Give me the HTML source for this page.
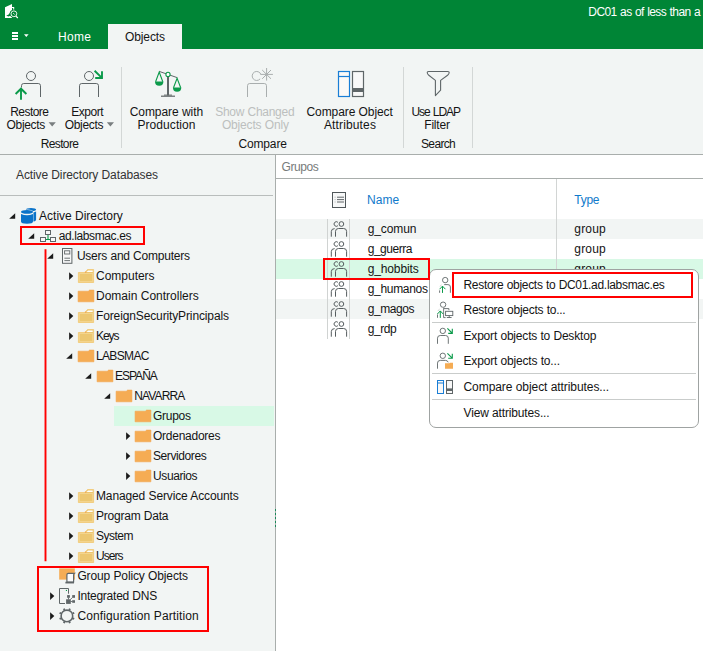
<!DOCTYPE html>
<html><head><meta charset="utf-8"><title>Veeam Explorer for Microsoft Active Directory</title>
<style>
html,body{margin:0;padding:0;}
body{width:703px;height:651px;overflow:hidden;position:relative;background:#f2f5f4;font-family:"Liberation Sans", sans-serif;font-size:12px;}
.a{position:absolute;}
.t{position:absolute;white-space:nowrap;line-height:16px;font-family:"Liberation Sans", sans-serif;}
svg{position:absolute;overflow:visible;}
</style></head><body>
<!-- title bar + tab strip -->
<div class="a" style="left:0;top:0;width:703px;height:49px;background:#008536;"></div>
<div class="a" style="left:108px;top:24px;width:74px;height:25px;background:#f2f5f4;"></div>
<!-- ribbon separators -->
<div class="a" style="left:121px;top:67px;width:1px;height:81px;background:#d3d7d6;"></div>
<div class="a" style="left:403px;top:67px;width:1px;height:81px;background:#d3d7d6;"></div>
<div class="a" style="left:472px;top:67px;width:1px;height:81px;background:#d3d7d6;"></div>
<!-- ribbon bottom border -->
<div class="a" style="left:0;top:154px;width:703px;height:1px;background:#a9aeac;"></div>
<!-- left panel header line -->
<div class="a" style="left:0;top:195px;width:273px;height:1px;background:#b9bdbc;"></div>
<!-- tree selected row -->
<div class="a" style="left:114px;top:406px;width:160px;height:20px;background:#d8f9e6;"></div>
<!-- right panel -->
<div class="a" style="left:276px;top:155px;width:427px;height:496px;background:#ffffff;"></div>
<div class="a" style="left:275px;top:155px;width:1px;height:496px;background:#a9aeac;"></div>
<div class="a" style="left:276px;top:178px;width:427px;height:1px;background:#a9aeac;"></div>
<!-- splitter grip -->
<div class="a" style="left:275px;top:509px;width:1px;height:2px;background:#1a8a5a;"></div>
<div class="a" style="left:275px;top:513px;width:1px;height:2px;background:#1a8a5a;"></div>
<div class="a" style="left:275px;top:517px;width:1px;height:2px;background:#1a8a5a;"></div>
<div class="a" style="left:275px;top:521px;width:1px;height:2px;background:#1a8a5a;"></div>
<div class="a" style="left:275px;top:525px;width:1px;height:2px;background:#1a8a5a;"></div>
<!-- table rows -->
<div class="a" style="left:276px;top:219px;width:427px;height:20px;background:#f2f5f4;"></div>
<div class="a" style="left:276px;top:259px;width:427px;height:20px;background:#d8f9e6;"></div>
<div class="a" style="left:276px;top:299px;width:427px;height:20px;background:#f2f5f4;"></div>
<!-- column separator -->
<div class="a" style="left:556px;top:179px;width:1px;height:160px;background:#d2d5d4;"></div>
<!-- icon cell borders -->
<div class="a" style="left:327px;top:219px;width:1px;height:120px;background:#d0d3d2;"></div>
<div class="a" style="left:349px;top:219px;width:1px;height:120px;background:#d0d3d2;"></div>
<!-- red annotations -->
<div class="a" style="left:20px;top:226px;width:121px;height:15px;border:2px solid #ff0000;"></div>
<div class="a" style="left:37px;top:566px;width:168px;height:62px;border:2px solid #ff0000;"></div>

<svg width="703" height="651" viewBox="0 0 703 651" style="left:0;top:0" fill="none">
<g fill="#fff" stroke="none">
<path d="M5 7.2 L12 4 L12 18 L5 18 Z"/>
<path d="M12 7 h2.2 v3 h-1 v-2 h-1.2 z"/>
</g>
<path d="M6.2 15.6 Q9.4 14.8 10.6 11.2 L12 12 Q11.4 16 8.4 16.6 Z" fill="#008536"/>
<circle cx="13.9" cy="13.8" r="4.2" fill="#008536"/>
<circle cx="13.9" cy="13.8" r="2.9" fill="#008536" stroke="#fff" stroke-width="0.9"/>
<path d="M13.2 13.1 l1.5 1.5" stroke="#fff" stroke-width="0.8"/>
<path d="M15.9 16.1 L17.8 18" stroke="#fff" stroke-width="1.2"/>
<g fill="#fff"><rect x="12" y="32" width="6" height="2"/><rect x="12" y="35" width="6" height="2"/><rect x="12" y="38" width="6" height="2"/>
<path d="M24 34.3 h4.6 l-2.3 2.6 z"/></g>
<circle cx="31" cy="76" r="4.5" stroke="#5f6668" stroke-width="1"/><path d="M21.5 87.5 V85.7 Q21.5 83.5 23.7 83.5 H38.3 Q40.5 83.5 40.5 85.7 V97" stroke="#5f6668" stroke-width="1"/>
<path d="M21 99.8 V89.2 M15.6 94 L21 88.7 L26.4 94" stroke="#0b9a4a" stroke-width="1.9"/>
<circle cx="89" cy="76" r="4.5" stroke="#5f6668" stroke-width="1"/><path d="M79.5 97 V85.7 Q79.5 83.5 81.7 83.5 H96.3 Q98.5 83.5 98.5 85.7 V97" stroke="#5f6668" stroke-width="1"/>
<path d="M94.6 70.8 L101.6 77.6 M102 71.2 V78.4 M95.2 78 H102.9" stroke="#0b9a4a" stroke-width="1.9"/>
<path d="M48.6 122.2 h7.2 l-3.6 4.4 z M106.8 122.2 h7.2 l-3.6 4.4 z" fill="#7a7f80"/>
<path d="M159.2 71.4 L177.1 77.6" stroke="#5f6668" stroke-width="1"/>
<rect x="167" y="76" width="2" height="19.5" fill="#5f6668"/>
<rect x="164" y="94.6" width="8" height="1" fill="#5f6668"/><rect x="161" y="95.6" width="14" height="1.2" fill="#5f6668"/>
<circle cx="168" cy="74.4" r="2.1" fill="#fff" stroke="#0b9a4a" stroke-width="1.1"/>
<path d="M155.6 81.8 L159.2 72 L162.8 81.8" stroke="#0b9a4a" stroke-width="1.1"/>
<path d="M155 81.6 H163.4 Q163.4 85.8 159.2 85.8 Q155 85.8 155 81.6 Z" fill="#0b9a4a"/>
<path d="M173.5 87.8 L177.1 78.2 L180.7 87.8" stroke="#0b9a4a" stroke-width="1.1"/>
<path d="M172.9 87.6 H181.3 Q181.3 91.8 177.1 91.8 Q172.9 91.8 172.9 87.6 Z" fill="#0b9a4a"/>
<path d="M260.1 78.9 A4.5 4.5 0 1 1 260.9 74.4" stroke="#a9aeae" stroke-width="1"/>
<path d="M247.5 97 V85.7 Q247.5 83.5 249.7 83.5 H264.3 Q266.5 83.5 266.5 85.7 V97" stroke="#a9aeae" stroke-width="1"/>
<path d="M266.6 68 V80.6 M260.4 74.4 H272.9 M262.2 70 L271 78.8 M271 70 L262.2 78.8" stroke="#a9aeae" stroke-width="1"/>
<rect x="338.5" y="71.5" width="11" height="25" fill="#fbf9f7" stroke="#1a7ed6" stroke-width="1.2"/>
<path d="M338.5 76.5 H349.5" stroke="#1a7ed6" stroke-width="1.2"/>
<rect x="352.5" y="71.5" width="11" height="25" fill="#f8f8f8" stroke="#5f6668" stroke-width="1.2"/>
<rect x="352.5" y="88" width="11" height="4" fill="#5f6668"/>
<path d="M428.6 71.5 H447.8 Q449.4 71.5 449.1 73 Q448.9 74.2 447.6 75.2 L440.6 80.4 V90.2 L435.4 95.6 V80.4 L428.8 75.2 Q427.5 74.2 427.3 73 Q427 71.5 428.6 71.5 Z" stroke="#5f6668" stroke-width="1.1" stroke-linejoin="round"/>
<path d="M15.2 213.2 V218.8 H9.2 Z" fill="#1a1a1a"/>
<ellipse cx="31" cy="209.6" rx="5.1" ry="1.6" fill="#0a73c9"/>
<path d="M25.9 211.4 Q31 213.9 36.1 211.4 V219.6 Q36.1 221.8 31 221.8 Q25.9 221.8 25.9 219.6 Z" fill="#0a73c9"/>
<path d="M20.6 212 Q20.6 209.4 27 209.4 Q33.4 209.4 33.4 212 V222 Q33.4 224.4 27 224.4 Q20.6 224.4 20.6 222 Z" fill="#f2f5f4"/>
<ellipse cx="27" cy="211.9" rx="6" ry="1.85" fill="#0a73c9"/>
<path d="M21 213.9 Q27 216.8 33 213.9 V221.6 Q33 223.8 27 223.8 Q21 223.8 21 221.6 Z" fill="#0a73c9"/>
<path d="M34.2 233.2 V238.8 H28.2 Z" fill="#1a1a1a"/>
<g stroke="#5f6668" stroke-width="1" fill="#f7f8f8"><rect x="45.5" y="230.5" width="5" height="4"/><rect x="40.5" y="237.5" width="5" height="4"/><rect x="50.5" y="237.5" width="5" height="4"/></g>
<path d="M48 235 V239.5 M45.9 239.5 H50.1" stroke="#0b9a4a" stroke-width="1.1"/>
<path d="M53.2 253.2 V258.8 H47.2 Z" fill="#1a1a1a"/>
<rect x="62.5" y="248.5" width="9.4" height="14.8" fill="#f7f8f8" stroke="#5f6668" stroke-width="1"/>
<rect x="64.6" y="250.8" width="5.2" height="3.2" stroke="#5f6668" stroke-width="0.9"/>
<path d="M64.4 258.2 H70 M64.4 260.6 H70" stroke="#5f6668" stroke-width="0.9"/>
<path d="M69.1 272.2 V280 L73.3 276.1 Z" fill="#1a1a1a"/>
<path d="M78.4 272.5 H85.1 L87.5 269.5 H93.6 V282.5 H78.4 Z" fill="#ecc771" stroke="#f2cd80" stroke-width="1" stroke-linejoin="round"/><rect x="79.4" y="273.5" width="13.2" height="8" fill="none" stroke="#f3d48d" stroke-width="1"/><path d="M86.5 272 L88.1 270.4 H92.7 V272 Z" fill="#ffffff"/><rect x="84.9" y="271.6" width="1.3" height="1.2" fill="#f2a64e"/>
<path d="M69.1 292.2 V300 L73.3 296.1 Z" fill="#1a1a1a"/>
<path d="M78.1 291.2 H88.3 L89.5 290.1 H93.9 V301.8 H78.1 Z" fill="#f5ac54" stroke="#f3a44c" stroke-width="0.6"/>
<path d="M69.1 312.2 V320 L73.3 316.1 Z" fill="#1a1a1a"/>
<path d="M78.4 312.5 H85.1 L87.5 309.5 H93.6 V322.5 H78.4 Z" fill="#ecc771" stroke="#f2cd80" stroke-width="1" stroke-linejoin="round"/><rect x="79.4" y="313.5" width="13.2" height="8" fill="none" stroke="#f3d48d" stroke-width="1"/><path d="M86.5 312 L88.1 310.4 H92.7 V312 Z" fill="#ffffff"/><rect x="84.9" y="311.6" width="1.3" height="1.2" fill="#f2a64e"/>
<path d="M69.1 332.2 V340 L73.3 336.1 Z" fill="#1a1a1a"/>
<path d="M78.4 332.5 H85.1 L87.5 329.5 H93.6 V342.5 H78.4 Z" fill="#ecc771" stroke="#f2cd80" stroke-width="1" stroke-linejoin="round"/><rect x="79.4" y="333.5" width="13.2" height="8" fill="none" stroke="#f3d48d" stroke-width="1"/><path d="M86.5 332 L88.1 330.4 H92.7 V332 Z" fill="#ffffff"/><rect x="84.9" y="331.6" width="1.3" height="1.2" fill="#f2a64e"/>
<path d="M72.2 353.2 V358.8 H66.2 Z" fill="#1a1a1a"/>
<path d="M78.1 351.2 H88.3 L89.5 350.1 H93.9 V361.8 H78.1 Z" fill="#f5ac54" stroke="#f3a44c" stroke-width="0.6"/>
<path d="M91.2 373.2 V378.8 H85.2 Z" fill="#1a1a1a"/>
<path d="M97.1 371.2 H107.3 L108.5 370.1 H112.9 V381.8 H97.1 Z" fill="#f5ac54" stroke="#f3a44c" stroke-width="0.6"/>
<path d="M110.2 393.2 V398.8 H104.2 Z" fill="#1a1a1a"/>
<path d="M116.1 391.2 H126.3 L127.5 390.1 H131.9 V401.8 H116.1 Z" fill="#f5ac54" stroke="#f3a44c" stroke-width="0.6"/>
<path d="M135.1 411.2 H145.3 L146.5 410.1 H150.9 V421.8 H135.1 Z" fill="#f5ac54" stroke="#f3a44c" stroke-width="0.6"/>
<path d="M126.1 432.2 V440 L130.3 436.1 Z" fill="#1a1a1a"/>
<path d="M135.1 431.2 H145.3 L146.5 430.1 H150.9 V441.8 H135.1 Z" fill="#f5ac54" stroke="#f3a44c" stroke-width="0.6"/>
<path d="M126.1 452.2 V460 L130.3 456.1 Z" fill="#1a1a1a"/>
<path d="M135.1 451.2 H145.3 L146.5 450.1 H150.9 V461.8 H135.1 Z" fill="#f5ac54" stroke="#f3a44c" stroke-width="0.6"/>
<path d="M126.1 472.2 V480 L130.3 476.1 Z" fill="#1a1a1a"/>
<path d="M135.1 471.2 H145.3 L146.5 470.1 H150.9 V481.8 H135.1 Z" fill="#f5ac54" stroke="#f3a44c" stroke-width="0.6"/>
<path d="M69.1 492.2 V500 L73.3 496.1 Z" fill="#1a1a1a"/>
<path d="M78.4 492.5 H85.1 L87.5 489.5 H93.6 V502.5 H78.4 Z" fill="#ecc771" stroke="#f2cd80" stroke-width="1" stroke-linejoin="round"/><rect x="79.4" y="493.5" width="13.2" height="8" fill="none" stroke="#f3d48d" stroke-width="1"/><path d="M86.5 492 L88.1 490.4 H92.7 V492 Z" fill="#ffffff"/><rect x="84.9" y="491.6" width="1.3" height="1.2" fill="#f2a64e"/>
<path d="M69.1 512.2 V520 L73.3 516.1 Z" fill="#1a1a1a"/>
<path d="M78.4 512.5 H85.1 L87.5 509.5 H93.6 V522.5 H78.4 Z" fill="#ecc771" stroke="#f2cd80" stroke-width="1" stroke-linejoin="round"/><rect x="79.4" y="513.5" width="13.2" height="8" fill="none" stroke="#f3d48d" stroke-width="1"/><path d="M86.5 512 L88.1 510.4 H92.7 V512 Z" fill="#ffffff"/><rect x="84.9" y="511.6" width="1.3" height="1.2" fill="#f2a64e"/>
<path d="M69.1 532.2 V540 L73.3 536.1 Z" fill="#1a1a1a"/>
<path d="M78.4 532.5 H85.1 L87.5 529.5 H93.6 V542.5 H78.4 Z" fill="#ecc771" stroke="#f2cd80" stroke-width="1" stroke-linejoin="round"/><rect x="79.4" y="533.5" width="13.2" height="8" fill="none" stroke="#f3d48d" stroke-width="1"/><path d="M86.5 532 L88.1 530.4 H92.7 V532 Z" fill="#ffffff"/><rect x="84.9" y="531.6" width="1.3" height="1.2" fill="#f2a64e"/>
<path d="M69.1 552.2 V560 L73.3 556.1 Z" fill="#1a1a1a"/>
<path d="M78.4 552.5 H85.1 L87.5 549.5 H93.6 V562.5 H78.4 Z" fill="#ecc771" stroke="#f2cd80" stroke-width="1" stroke-linejoin="round"/><rect x="79.4" y="553.5" width="13.2" height="8" fill="none" stroke="#f3d48d" stroke-width="1"/><path d="M86.5 552 L88.1 550.4 H92.7 V552 Z" fill="#ffffff"/><rect x="84.9" y="551.6" width="1.3" height="1.2" fill="#f2a64e"/>
<rect x="59.2" y="568.4" width="15.6" height="11.2" fill="#f5ac54"/>
<path d="M66.9 582 V574.8 Q66.9 573.4 68.3 573.4 H74.4 Q73.4 574.2 73.6 575.6 V582 Z" fill="#fbfbfb" stroke="#5f6668" stroke-width="1.2"/>
<path d="M65.4 582.6 H74" stroke="#5f6668" stroke-width="1.7"/>
<path d="M50.1 592.2 V600 L54.3 596.1 Z" fill="#1a1a1a"/>
<path d="M68.5 593.7 V588.5 H59.5 V603.5 H65" stroke="#5f6668" stroke-width="1" stroke-linejoin="miter"/>
<rect x="65.9" y="589.9" width="1.1" height="1.1" fill="#0b9a4a"/>
<g fill="#5f6668"><rect x="66.1" y="599.3" width="4.7" height="4.6"/><rect x="67.1" y="595.1" width="2.8" height="2.7"/><rect x="72.2" y="595.1" width="2.8" height="2.7"/><rect x="72.2" y="600.2" width="2.8" height="2.6"/></g>
<path d="M68.5 597.5 V599.5 M70.3 599.6 L72.4 597.5 M70.6 601.5 H72.4" stroke="#5f6668" stroke-width="0.9"/>
<path d="M50.1 612.2 V620 L54.3 616.1 Z" fill="#1a1a1a"/>
<circle cx="66.9" cy="615.9" r="5.8" stroke="#5f6668" stroke-width="1.6"/>
<path d="M72.72 618.31 L74.20 618.92 M69.31 621.72 L69.92 623.20 M64.49 621.72 L63.88 623.20 M61.08 618.31 L59.60 618.92 M61.08 613.49 L59.60 612.88 M64.49 610.08 L63.88 608.60 M69.31 610.08 L69.92 608.60 M72.72 613.49 L74.20 612.88" stroke="#5f6668" stroke-width="1.9"/>
<rect x="332.5" y="192.5" width="13" height="15" fill="#f7f8f8" stroke="#50575a" stroke-width="1"/>
<path d="M337 197.2 H344 M337 199.6 H344 M337 202 H344" stroke="#50575a" stroke-width="0.9"/>
<path d="M334.6 197.2 H335.6 M334.6 199.6 H335.6 M334.6 202 H335.6" stroke="#aab0b0" stroke-width="0.9"/>
<path d="M337.9 225.7 A2.3 2.3 0 1 1 337.9 222.3" stroke="#555c5e" stroke-width="1"/><circle cx="341.4" cy="224" r="2.35" stroke="#555c5e" stroke-width="1"/><path d="M335.5 236.7 V231.4 Q335.5 228.5 338.5 228.5 H343.6 Q346.6 228.5 346.6 231.4 V236.7" stroke="#555c5e" stroke-width="1"/><path d="M331.3 236.7 V231.6 Q331.3 228.7 334.6 228.6" stroke="#555c5e" stroke-width="1"/>
<path d="M337.9 245.7 A2.3 2.3 0 1 1 337.9 242.3" stroke="#555c5e" stroke-width="1"/><circle cx="341.4" cy="244" r="2.35" stroke="#555c5e" stroke-width="1"/><path d="M335.5 256.7 V251.4 Q335.5 248.5 338.5 248.5 H343.6 Q346.6 248.5 346.6 251.4 V256.7" stroke="#555c5e" stroke-width="1"/><path d="M331.3 256.7 V251.6 Q331.3 248.7 334.6 248.6" stroke="#555c5e" stroke-width="1"/>
<path d="M337.9 265.7 A2.3 2.3 0 1 1 337.9 262.3" stroke="#555c5e" stroke-width="1"/><circle cx="341.4" cy="264" r="2.35" stroke="#555c5e" stroke-width="1"/><path d="M335.5 276.7 V271.4 Q335.5 268.5 338.5 268.5 H343.6 Q346.6 268.5 346.6 271.4 V276.7" stroke="#555c5e" stroke-width="1"/><path d="M331.3 276.7 V271.6 Q331.3 268.7 334.6 268.6" stroke="#555c5e" stroke-width="1"/>
<path d="M337.9 285.7 A2.3 2.3 0 1 1 337.9 282.3" stroke="#555c5e" stroke-width="1"/><circle cx="341.4" cy="284" r="2.35" stroke="#555c5e" stroke-width="1"/><path d="M335.5 296.7 V291.4 Q335.5 288.5 338.5 288.5 H343.6 Q346.6 288.5 346.6 291.4 V296.7" stroke="#555c5e" stroke-width="1"/><path d="M331.3 296.7 V291.6 Q331.3 288.7 334.6 288.6" stroke="#555c5e" stroke-width="1"/>
<path d="M337.9 305.7 A2.3 2.3 0 1 1 337.9 302.3" stroke="#555c5e" stroke-width="1"/><circle cx="341.4" cy="304" r="2.35" stroke="#555c5e" stroke-width="1"/><path d="M335.5 316.7 V311.4 Q335.5 308.5 338.5 308.5 H343.6 Q346.6 308.5 346.6 311.4 V316.7" stroke="#555c5e" stroke-width="1"/><path d="M331.3 316.7 V311.6 Q331.3 308.7 334.6 308.6" stroke="#555c5e" stroke-width="1"/>
<path d="M337.9 325.7 A2.3 2.3 0 1 1 337.9 322.3" stroke="#555c5e" stroke-width="1"/><circle cx="341.4" cy="324" r="2.35" stroke="#555c5e" stroke-width="1"/><path d="M335.5 336.7 V331.4 Q335.5 328.5 338.5 328.5 H343.6 Q346.6 328.5 346.6 331.4 V336.7" stroke="#555c5e" stroke-width="1"/><path d="M331.3 336.7 V331.6 Q331.3 328.7 334.6 328.6" stroke="#555c5e" stroke-width="1"/>
<path d="M45.5 249.2 V561.2" stroke="#ff0000" stroke-width="1.9"/>
</svg>
<div class="t" style="left:588.30px;top:3.84px;font-size:12px;color:#ffffff;letter-spacing:-0.563px;word-spacing:0.563px;">DC01 as of less than a</div>
<div class="t" style="left:58.00px;top:28.84px;font-size:12px;color:#ffffff;letter-spacing:0.328px;">Home</div>
<div class="t" style="left:125.00px;top:28.84px;font-size:12px;color:#141414;letter-spacing:-0.115px;">Objects</div>
<div class="t" style="left:10.20px;top:103.84px;font-size:12px;color:#141414;letter-spacing:-0.539px;">Restore</div>
<div class="t" style="left:6.50px;top:116.84px;font-size:12px;color:#141414;letter-spacing:-0.315px;">Objects</div>
<div class="t" style="left:71.20px;top:103.84px;font-size:12px;color:#141414;letter-spacing:-0.478px;">Export</div>
<div class="t" style="left:64.70px;top:116.84px;font-size:12px;color:#141414;letter-spacing:-0.315px;">Objects</div>
<div class="t" style="left:40.70px;top:135.84px;font-size:12px;color:#141414;letter-spacing:-0.622px;">Restore</div>
<div class="t" style="left:129.70px;top:103.84px;font-size:12px;color:#141414;letter-spacing:-0.053px;word-spacing:0.053px;">Compare with</div>
<div class="t" style="left:137.40px;top:116.84px;font-size:12px;color:#141414;letter-spacing:0.081px;">Production</div>
<div class="t" style="left:215.20px;top:103.84px;font-size:12px;color:#bcbfbe;letter-spacing:-0.266px;word-spacing:0.266px;">Show Changed</div>
<div class="t" style="left:221.90px;top:116.84px;font-size:12px;color:#bcbfbe;letter-spacing:-0.160px;word-spacing:0.160px;">Objects Only</div>
<div class="t" style="left:238.50px;top:135.84px;font-size:12px;color:#141414;letter-spacing:-0.160px;">Compare</div>
<div class="t" style="left:306.50px;top:103.84px;font-size:12px;color:#141414;letter-spacing:-0.090px;word-spacing:0.090px;">Compare Object</div>
<div class="t" style="left:323.90px;top:116.84px;font-size:12px;color:#141414;letter-spacing:0.144px;">Attributes</div>
<div class="t" style="left:411.50px;top:103.84px;font-size:12px;color:#141414;letter-spacing:-1.105px;word-spacing:1.105px;">Use LDAP</div>
<div class="t" style="left:424.30px;top:116.84px;font-size:12px;color:#141414;letter-spacing:-0.214px;">Filter</div>
<div class="t" style="left:421.00px;top:135.84px;font-size:12px;color:#141414;letter-spacing:-0.646px;">Search</div>
<div class="t" style="left:16.00px;top:166.84px;font-size:12px;color:#333333;letter-spacing:-0.119px;word-spacing:0.119px;">Active Directory Databases</div>
<div class="t" style="left:39.10px;top:207.84px;font-size:12px;color:#141414;letter-spacing:-0.017px;word-spacing:0.017px;">Active Directory</div>
<div class="t" style="left:58.70px;top:227.84px;font-size:12px;color:#141414;letter-spacing:-0.381px;">ad.labsmac.es</div>
<div class="t" style="left:76.90px;top:247.84px;font-size:12px;color:#141414;letter-spacing:-0.226px;word-spacing:0.226px;">Users and Computers</div>
<div class="t" style="left:96.00px;top:267.84px;font-size:12px;color:#141414;letter-spacing:-0.011px;">Computers</div>
<div class="t" style="left:96.00px;top:287.84px;font-size:12px;color:#141414;letter-spacing:0.006px;word-spacing:-0.006px;">Domain Controllers</div>
<div class="t" style="left:96.00px;top:307.84px;font-size:12px;color:#141414;letter-spacing:-0.128px;">ForeignSecurityPrincipals</div>
<div class="t" style="left:96.00px;top:327.84px;font-size:12px;color:#141414;letter-spacing:-1.062px;">Keys</div>
<div class="t" style="left:96.00px;top:347.84px;font-size:12px;color:#141414;letter-spacing:-0.660px;">LABSMAC</div>
<div class="t" style="left:115.00px;top:367.84px;font-size:12px;color:#141414;letter-spacing:-0.999px;">ESPAÑA</div>
<div class="t" style="left:134.30px;top:387.84px;font-size:12px;color:#141414;letter-spacing:-0.872px;">NAVARRA</div>
<div class="t" style="left:153.00px;top:407.84px;font-size:12px;color:#141414;letter-spacing:-0.272px;">Grupos</div>
<div class="t" style="left:153.00px;top:427.84px;font-size:12px;color:#141414;letter-spacing:-0.255px;">Ordenadores</div>
<div class="t" style="left:153.00px;top:447.84px;font-size:12px;color:#141414;letter-spacing:-0.407px;">Servidores</div>
<div class="t" style="left:153.00px;top:467.84px;font-size:12px;color:#141414;letter-spacing:-0.394px;">Usuarios</div>
<div class="t" style="left:96.00px;top:487.84px;font-size:12px;color:#141414;letter-spacing:-0.125px;word-spacing:0.125px;">Managed Service Accounts</div>
<div class="t" style="left:96.00px;top:507.84px;font-size:12px;color:#141414;letter-spacing:-0.220px;word-spacing:0.220px;">Program Data</div>
<div class="t" style="left:96.00px;top:527.84px;font-size:12px;color:#141414;letter-spacing:-0.503px;">System</div>
<div class="t" style="left:96.00px;top:547.84px;font-size:12px;color:#141414;letter-spacing:-0.961px;">Users</div>
<div class="t" style="left:77.40px;top:567.84px;font-size:12px;color:#141414;letter-spacing:-0.125px;word-spacing:0.125px;">Group Policy Objects</div>
<div class="t" style="left:77.40px;top:587.84px;font-size:12px;color:#141414;letter-spacing:-0.243px;word-spacing:0.243px;">Integrated DNS</div>
<div class="t" style="left:77.40px;top:607.84px;font-size:12px;color:#141414;letter-spacing:0.127px;word-spacing:-0.127px;">Configuration Partition</div>
<div class="t" style="left:281.60px;top:158.84px;font-size:12px;color:#777b7a;letter-spacing:-0.432px;">Grupos</div>
<div class="t" style="left:367.00px;top:191.84px;font-size:12px;color:#0f7acb;letter-spacing:0.095px;">Name</div>
<div class="t" style="left:574.30px;top:191.84px;font-size:12px;color:#0f7acb;letter-spacing:-0.272px;">Type</div>
<div class="t" style="left:367.70px;top:220.84px;font-size:12px;color:#141414;letter-spacing:-0.096px;">g_comun</div>
<div class="t" style="left:367.70px;top:240.84px;font-size:12px;color:#141414;letter-spacing:-0.478px;">g_guerra</div>
<div class="t" style="left:367.70px;top:260.84px;font-size:12px;color:#141414;letter-spacing:-0.131px;">g_hobbits</div>
<div class="t" style="left:367.70px;top:280.84px;font-size:12px;color:#141414;letter-spacing:-0.302px;">g_humanos</div>
<div class="t" style="left:367.70px;top:300.84px;font-size:12px;color:#141414;letter-spacing:-0.412px;">g_magos</div>
<div class="t" style="left:367.70px;top:320.84px;font-size:12px;color:#141414;letter-spacing:-0.401px;">g_rdp</div>
<div class="t" style="left:574.30px;top:220.84px;font-size:12px;color:#141414;letter-spacing:0.174px;">group</div>
<div class="t" style="left:574.30px;top:240.84px;font-size:12px;color:#141414;letter-spacing:0.174px;">group</div>
<div class="t" style="left:574.30px;top:260.84px;font-size:12px;color:#141414;letter-spacing:0.174px;">group</div>
<div class="a" style="left:429px;top:269px;width:268px;height:157px;background:#ffffff;border:1px solid #9fa3a2;border-radius:7px;"></div>
<div class="a" style="left:432px;top:322px;width:264px;height:1px;background:#c9cccb;"></div>
<div class="a" style="left:432px;top:373px;width:264px;height:1px;background:#c9cccb;"></div>
<div class="a" style="left:432px;top:399px;width:264px;height:1px;background:#c9cccb;"></div>
<div class="a" style="left:452px;top:272px;width:237px;height:22px;border:2px solid #ff0000;"></div>
<div class="a" style="left:323px;top:258px;width:103px;height:18px;border:2px solid #ff0000;"></div>
<svg width="703" height="651" viewBox="0 0 703 651" style="left:0;top:0" fill="none">
<circle cx="445.2" cy="280.1" r="2.7" stroke="#5f6668" stroke-width="0.9"/>
<path d="M439.6 292.8 V287 Q439.6 284.6 442 284.6 H447.9 Q450.4 284.6 450.4 287 V292.8" stroke="#5f6668" stroke-width="0.9" stroke-dasharray="0"/>
<rect x="438.8" y="283.8" width="5.4" height="6.6" fill="#fff"/>
<path d="M440 286.6 Q440.4 285.2 441.6 284.8" stroke="#c5c9c9" stroke-width="0.8"/>
<path d="M442.5 292.9 V286.2 M439.6 289.2 L442.5 286.1 L445.4 289.2" stroke="#0b9a4a" stroke-width="1"/>
<circle cx="443.1" cy="304.7" r="2.7" stroke="#5f6668" stroke-width="0.9"/>
<path d="M437.5 317.8 V311 Q437.5 308.6 439.9 308.6 H448.9 V310.2 M443.6 309 V317.6 H445.6" stroke="#5f6668" stroke-width="0.9"/>
<rect x="436.8" y="307.8" width="6.3" height="6.6" fill="#fff"/>
<path d="M438 311 Q438.4 309.6 439.6 309.2" stroke="#c5c9c9" stroke-width="0.8"/>
<path d="M440.3 317.9 V311 M437.4 314 L440.3 310.9 L443.2 314" stroke="#0b9a4a" stroke-width="1"/>
<rect x="445.6" y="311.3" width="7.2" height="4.3" fill="#fff" stroke="#5f6668" stroke-width="0.9"/>
<path d="M449.2 315.6 V317.4 M446.8 317.5 H451.6" stroke="#5f6668" stroke-width="0.9"/>
<circle cx="442.8" cy="330.9" r="2.7" stroke="#5f6668" stroke-width="0.9"/><path d="M437.5 343.8 V338.2 Q437.5 335.5 440.3 335.5 H445.5 Q448.3 335.5 448.3 338.2 V343.8" stroke="#5f6668" stroke-width="0.9"/><path d="M447.4 328.4 L452 333 M452.3 328.8 V333.9 M448.2 333.4 H452.8" stroke="#0b9a4a" stroke-width="1.1"/>
<circle cx="442.8" cy="355.8" r="2.7" stroke="#5f6668" stroke-width="0.9"/><path d="M437.5 368.7 V363.1 Q437.5 360.4 440.3 360.4 H445.5 Q447.6 360.4 448.2 362.3" stroke="#5f6668" stroke-width="0.9"/><path d="M445 363.3 H449.4 L450 362.7 H453 V368.7 H445 Z" fill="#f5ac54"/><path d="M447.4 353.3 L452 357.9 M452.3 353.7 V358.8 M448.2 358.3 H452.8" stroke="#0b9a4a" stroke-width="1.1"/>
<rect x="437.5" y="380.5" width="6" height="13" fill="#fbf9f7" stroke="#1a7ed6" stroke-width="1"/>
<path d="M437.5 383 H443.5" stroke="#1a7ed6" stroke-width="1"/>
<rect x="446.5" y="380.5" width="6" height="13" fill="#f8f8f8" stroke="#5f6668" stroke-width="1"/>
<rect x="446.5" y="388.4" width="6" height="2.6" fill="#5f6668"/>
</svg>
<div class="t" style="left:463.50px;top:277.14px;font-size:12px;color:#141414;letter-spacing:-0.307px;word-spacing:0.307px;">Restore objects to DC01.ad.labsmac.es</div>
<div class="t" style="left:463.50px;top:302.14px;font-size:12px;color:#141414;letter-spacing:-0.251px;word-spacing:0.251px;">Restore objects to...</div>
<div class="t" style="left:463.50px;top:328.14px;font-size:12px;color:#141414;letter-spacing:-0.187px;word-spacing:0.187px;">Export objects to Desktop</div>
<div class="t" style="left:463.50px;top:353.14px;font-size:12px;color:#141414;letter-spacing:-0.170px;word-spacing:0.170px;">Export objects to...</div>
<div class="t" style="left:463.50px;top:379.14px;font-size:12px;color:#141414;letter-spacing:-0.068px;word-spacing:0.068px;">Compare object attributes...</div>
<div class="t" style="left:463.50px;top:404.64px;font-size:12px;color:#141414;letter-spacing:-0.150px;word-spacing:0.150px;">View attributes...</div>
</body></html>
